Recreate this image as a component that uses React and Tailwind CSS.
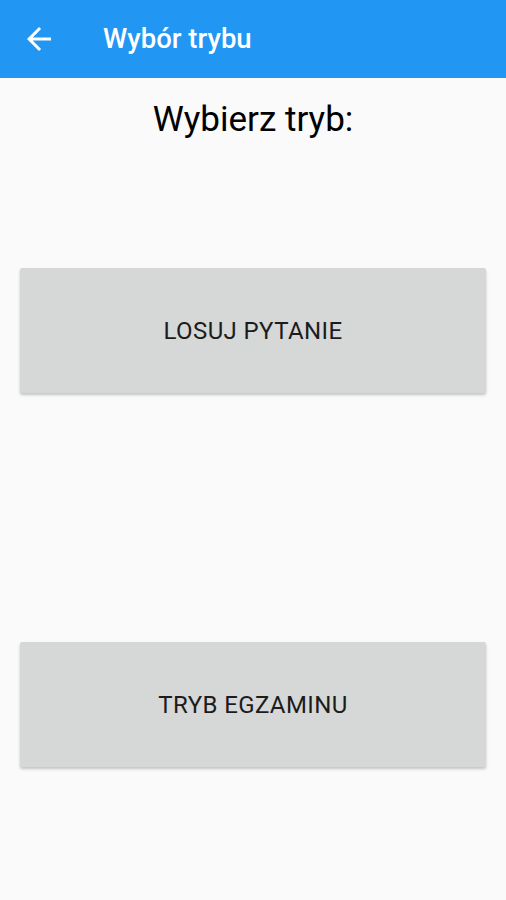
import { useState } from 'react';

const ModeButton = ({ label, onClick }) => (
  <button
    onClick={onClick}
    className="w-full h-[125px] bg-[#d6d7d7] rounded-[2px] shadow-[0_2px_3px_rgba(0,0,0,0.22)] text-[24px] text-[#1c1c1c] tracking-[0.4px]"
  >
    {label}
  </button>
);

const App = () => {
  const [mode, setMode] = useState(null);

  return (
    <div className="min-h-[900px] bg-[#fafafa] font-['Roboto',sans-serif]">
      <div className="h-[78px] bg-[#2196f3] flex items-center">
        <button className="ml-[21px] w-[36px] h-[36px] text-white">
          <svg viewBox="0 0 24 24" width="36" height="36" fill="currentColor">
            <path d="M20 11H7.83l5.59-5.59L12 4l-8 8 8 8 1.41-1.41L7.83 13H20v-2z" />
          </svg>
        </button>
        <h1 className="ml-[46px] text-white text-[27.5px] font-medium">Wybór trybu</h1>
      </div>

      <div className="px-[20px]">
        <p className="mt-[21px] text-center text-[35px] leading-[42px] text-black">Wybierz tryb:</p>
        <div className="mt-[127px]">
          <ModeButton label="LOSUJ PYTANIE" onClick={() => setMode('random')} />
        </div>
        <div className="mt-[249px]">
          <ModeButton label="TRYB EGZAMINU" onClick={() => setMode('exam')} />
        </div>
      </div>
    </div>
  );
};

export default App;
